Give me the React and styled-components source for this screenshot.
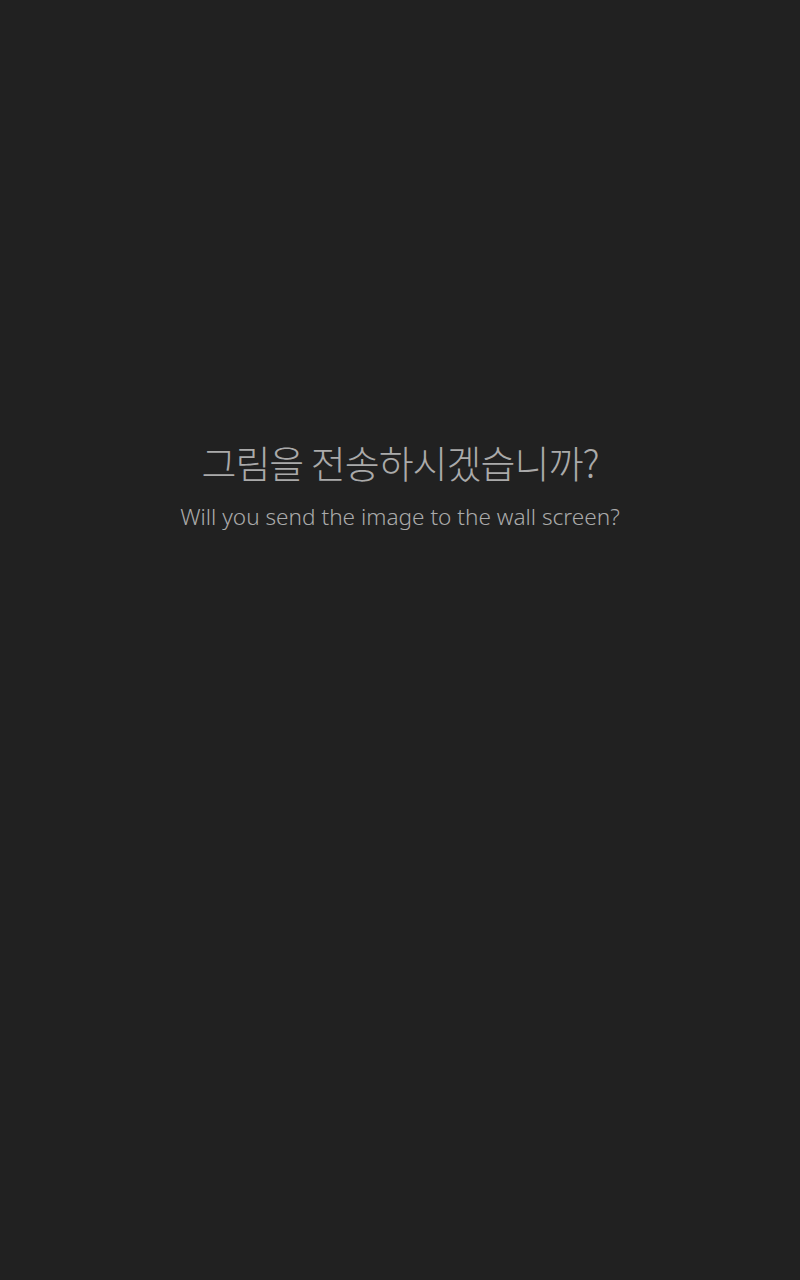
import styled, { createGlobalStyle } from "styled-components";

const Global = createGlobalStyle`
  html, body {
    margin: 0;
    padding: 0;
    background: #212121;
  }
`;

export default function App() {
  return (
    <>
      <Global />
      <Screen>
        <Prompt>
          <Title>그림을 전송하시겠습니까?</Title>
          <Subtitle>Will you send the image to the wall screen?</Subtitle>
        </Prompt>
      </Screen>
    </>
  );
}

const Screen = styled.div`
  width: 800px;
  height: 1280px;
  background: #212121;
  display: flex;
  flex-direction: column;
  align-items: center;
  padding-top: 436px;
  box-sizing: border-box;
`;

const Prompt = styled.div`
  display: flex;
  flex-direction: column;
  align-items: center;
  gap: 14px;
`;

const Title = styled.h1`
  margin: 0;
  font-family: "Noto Sans CJK KR", "Noto Sans", sans-serif;
  font-size: 38px;
  font-weight: 300;
  color: #aaaaaa;
  line-height: 52px;
  letter-spacing: -1px;
`;

const Subtitle = styled.p`
  margin: 0;
  font-family: "Noto Sans", "Noto Sans CJK KR", sans-serif;
  font-size: 22.6px;
  font-weight: 300;
  color: #aaaaaa;
  line-height: 30px;
`;
